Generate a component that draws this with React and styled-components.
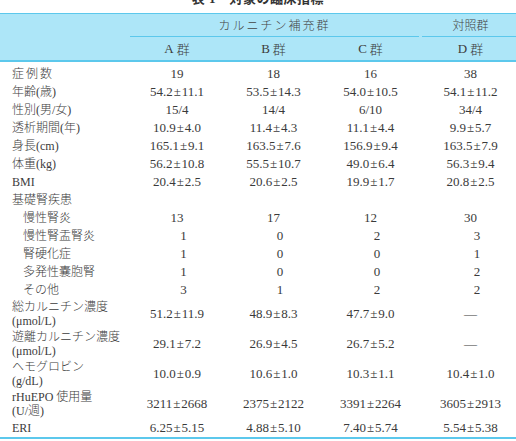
import React from "react";
import styled, { createGlobalStyle } from "styled-components";

const GlobalStyle = createGlobalStyle`
  html, body { margin: 0; padding: 0; background: #ffffff; }
  body {
    font-family: "Liberation Serif", "Noto Sans CJK JP", serif;
    color: #3a3a3a;
  }
`;

const COLS = "129px 96px 97px 97px 1fr";
const LINE = "#5cc8ec";

const Page = styled.div`
  width: 516px;
`;

const Title = styled.div`
  margin: -8px 0 8px;
  height: 13px;
  line-height: 13px;
  font-size: 13px;
  font-weight: 700;
  text-align: center;
  color: #333;
  letter-spacing: 0.5px;
`;

const Header = styled.div`
  background: #ade6f8;
  border-top: 1px solid ${LINE};
  border-bottom: 2px solid ${LINE};
`;

const HeaderRow = styled.div`
  display: grid;
  grid-template-columns: ${COLS};
  height: ${(p) => p.$h}px;
`;

const GroupCell = styled.div`
  grid-column: ${(p) => p.$span};
  display: flex;
  align-items: center;
  justify-content: center;
  border-bottom: 1.5px solid ${LINE};
  margin-left: ${(p) => p.$ml || 0}px;
  padding-left: ${(p) => p.$pl || 0}px;
  font-size: 12px;
  font-weight: 300;
  letter-spacing: ${(p) => p.$ls || 0}px;
  color: #444;
`;

const ColHead = styled.div`
  display: flex;
  align-items: center;
  justify-content: center;
  padding-left: ${(p) => p.$pl || 0}px;
  font-size: 13px;
  font-weight: 300;
  color: #3c3c3c;
  gap: 3px;
`;

const Body = styled.div`
  padding-top: 3px;
  border-bottom: 2px solid ${LINE};
`;

const Row = styled.div`
  display: grid;
  grid-template-columns: ${COLS};
  height: ${(p) => (p.$tall ? 30 : 18)}px;
  align-items: center;
`;

const Label = styled.div`
  padding-left: ${(p) => (p.$indent ? 23 : 12)}px;
  font-size: 12px;
  font-weight: 300;
  line-height: 14px;
  letter-spacing: ${(p) => p.$ls || 0}px;
  white-space: nowrap;
  color: #3c3c3c;
`;

const Value = styled.div`
  text-align: center;
  font-size: 13px;
  padding-left: ${(p) => p.$pl || 0}px;
  white-space: nowrap;
  color: #3a3a3a;
`;

const PlusMinus = styled.span`
  margin: 0 1px;
`;

const pm = (a, b) => (
  <>
    {a}
    <PlusMinus>±</PlusMinus>
    {b}
  </>
);

const F = "\u2007\u2007";

const rows = [
  { label: "症例数", ls: 2, v: ["19", "18", "16", "38"] },
  { label: "年齢(歳)", v: [pm("54.2", "11.1"), pm("53.5", "14.3"), pm("54.0", "10.5"), pm("54.1", "11.2")] },
  { label: "性別(男/女)", v: ["15/4", "14/4", "6/10", "34/4"] },
  { label: "透析期間(年)", v: [pm("10.9", "4.0"), pm("11.4", "4.3"), pm("11.1", "4.4"), pm("9.9", "5.7")] },
  { label: "身長(cm)", v: [pm("165.1", "9.1"), pm("163.5", "7.6"), pm("156.9", "9.4"), pm("163.5", "7.9")] },
  { label: "体重(kg)", v: [pm("56.2", "10.8"), pm("55.5", "10.7"), pm("49.0", "6.4"), pm("56.3", "9.4")] },
  { label: "BMI", v: [pm("20.4", "2.5"), pm("20.6", "2.5"), pm("19.9", "1.7"), pm("20.8", "2.5")] },
  { label: "基礎腎疾患", v: ["", "", "", ""] },
  { label: "慢性腎炎", indent: true, v: ["13", "17", "12", "30"] },
  { label: "慢性腎盂腎炎", indent: true, v: [F + "1", F + "0", F + "2", F + "3"] },
  { label: "腎硬化症", indent: true, v: [F + "1", F + "0", F + "0", F + "1"] },
  { label: "多発性嚢胞腎", indent: true, v: [F + "1", F + "0", F + "0", F + "2"] },
  { label: "その他", indent: true, v: [F + "3", F + "1", F + "2", F + "2"] },
  { label: ["総カルニチン濃度", "(μmol/L)"], tall: true, v: [pm("51.2", "11.9"), pm("48.9", "8.3"), pm("47.7", "9.0"), "—"] },
  { label: ["遊離カルニチン濃度", "(μmol/L)"], tall: true, v: [pm("29.1", "7.2"), pm("26.9", "4.5"), pm("26.7", "5.2"), "—"] },
  { label: ["ヘモグロビン", "(g/dL)"], tall: true, v: [pm("10.0", "0.9"), pm("10.6", "1.0"), pm("10.3", "1.1"), pm("10.4", "1.0")] },
  { label: ["rHuEPO 使用量", "(U/週)"], tall: true, v: [pm("3211", "2668"), pm("2375", "2122"), pm("3391", "2264"), pm("3605", "2913")] },
  { label: "ERI", v: [pm("6.25", "5.15"), pm("4.88", "5.10"), pm("7.40", "5.74"), pm("5.54", "5.38")] },
];

export default function App() {
  return (
    <Page>
      <GlobalStyle />
      <Title>表 1　対象の臨床指標</Title>
      <Header>
        <HeaderRow $h={23}>
          <div />
          <GroupCell $span="2 / 5" $ml={1} $ls={2}>カルニチン補充群</GroupCell>
          <GroupCell $span="5 / 6" $ml={3} $pl={3}>対照群</GroupCell>
        </HeaderRow>
        <HeaderRow $h={23}>
          <div />
          <ColHead>A<span>群</span></ColHead>
          <ColHead>B<span>群</span></ColHead>
          <ColHead>C<span>群</span></ColHead>
          <ColHead $pl={6}>D<span>群</span></ColHead>
        </HeaderRow>
      </Header>
      <Body>
        {rows.map((r, i) => (
          <Row key={i} $tall={r.tall}>
            <Label $indent={r.indent} $ls={r.ls}>
              {Array.isArray(r.label) ? (
                <>
                  {r.label[0]}
                  <br />
                  {r.label[1]}
                </>
              ) : (
                r.label
              )}
            </Label>
            {r.v.map((v, j) => (
              <Value key={j} $pl={j === 3 ? 6 : 0}>
                {v}
              </Value>
            ))}
          </Row>
        ))}
      </Body>
    </Page>
  );
}
